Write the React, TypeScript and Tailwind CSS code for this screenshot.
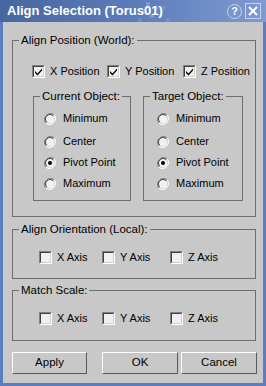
import React from "react"

const font = { fontFamily: '"Liberation Sans", Arial, sans-serif' }

function Check({ checked, label, className = "" }: { checked?: boolean; label: string; className?: string }) {
  return (
    <div className={`flex items-center shrink-0 ${className}`}>
      <div className="shrink-0 w-[13px] h-[13px] border-t border-l border-[#808080] border-b border-r border-b-white border-r-white">
        <div className="w-[11px] h-[11px] border-t border-l border-[#404040] border-b border-r border-b-[#d4d0c8] border-r-[#d4d0c8] bg-[#f2eff2] flex items-center justify-center">
          {checked && (
            <svg width="9" height="9" viewBox="0 0 9 9">
              <path d="M1 4 L3.5 6.5 L8 1.5 L8 3.5 L3.5 8.5 L1 6 Z" fill="#000" />
            </svg>
          )}
        </div>
      </div>
      <span className="ml-[5px] whitespace-nowrap text-[11px] text-black leading-[13px]">{label}</span>
    </div>
  )
}

function Radio({ checked, label, className = "" }: { checked?: boolean; label: string; className?: string }) {
  return (
    <div className={`flex items-center h-[21px] ${className}`}>
      <svg className="shrink-0" width="12" height="12" viewBox="0 0 12 12">
        <path d="M10.2 1.8 A6 6 0 0 0 1.8 10.2" stroke="#808080" fill="none" />
        <path d="M1.8 10.2 A6 6 0 0 0 10.2 1.8" stroke="#ffffff" fill="none" />
        <circle cx="6" cy="6" r="4.5" fill="#f2f0f2" />
        <path d="M9.2 2.8 A4.5 4.5 0 0 0 2.8 9.2" stroke="#404040" fill="none" />
        {checked && <circle cx="6" cy="6" r="2" fill="#000" />}
      </svg>
      <span className="ml-[7px] whitespace-nowrap text-[11px] text-black leading-[13px]">{label}</span>
    </div>
  )
}

function Group({ title, className = "", children }: { title: string; className?: string; children: React.ReactNode }) {
  return (
    <fieldset className={`border border-[#6e6e6e] ${className}`}>
      <legend className="ml-[6px] px-[2px] whitespace-nowrap text-[11.5px] leading-[14px] text-black">{title}</legend>
      {children}
    </fieldset>
  )
}

function Btn({ label, className = "" }: { label: string; className?: string }) {
  return (
    <button className={`h-[22px] border border-t-white border-l-white border-b-[#5a5a5a] border-r-[#5a5a5a] bg-[#c8c8c8] text-[11.5px] text-black ${className}`}>
      {label}
    </button>
  )
}

function RadioSet() {
  return (
    <>
      <Radio label="Minimum" className="mb-[2px]" />
      <Radio label="Center" />
      <Radio checked label="Pivot Point" />
      <Radio label="Maximum" />
    </>
  )
}

export default function App() {
  return (
    <div style={font} className="w-[266px] h-[386px] bg-[#5b7ec2] flex flex-col">
      <div className="relative h-[22px] bg-gradient-to-r from-[#46679f] via-[#5b7cba] to-[#7f9ad0] flex items-center">
        <svg className="absolute left-[138px] top-0" width="36" height="22" viewBox="0 0 36 22">
          <rect x="8" y="2" width="4" height="4" fill="#8aa2d4" opacity="0.7" />
          <rect x="16" y="6" width="4" height="4" fill="#8aa2d4" opacity="0.6" />
          <rect x="4" y="10" width="4" height="4" fill="#8aa2d4" opacity="0.5" />
          <rect x="12" y="14" width="4" height="4" fill="#8aa2d4" opacity="0.7" />
          <rect x="20" y="14" width="4" height="4" fill="#8aa2d4" opacity="0.5" />
          <rect x="24" y="6" width="4" height="4" fill="#8aa2d4" opacity="0.4" />
          <rect x="0" y="18" width="4" height="4" fill="#8aa2d4" opacity="0.4" />
          <rect x="28" y="18" width="4" height="4" fill="#8aa2d4" opacity="0.4" />
        </svg>
        <span className="relative ml-[7px] text-[13px] font-bold text-white">Align Selection (Torus01)</span>
        <div className="relative ml-auto mr-[5px] flex items-center gap-[3px]">
          <div className="w-[15px] h-[15px] rounded-full border border-[#c8d4ee] flex items-center justify-center text-[11px] font-bold text-white leading-none">?</div>
          <div className="w-[16px] h-[16px] border border-[#c8d4ee] flex items-center justify-center">
            <svg width="10" height="10" viewBox="0 0 10 10">
              <path d="M1 1 L9 9 M9 1 L1 9" stroke="#fff" strokeWidth="2" />
            </svg>
          </div>
        </div>
      </div>
      <div className="mx-[3px] mb-[3px] flex-1 bg-[#c8c8c8] pt-[11px] pl-[9px]">
        <Group title="Align Position (World):" className="w-[244px] h-[184px]">
          <div className="flex mt-[18px] pl-[19px]">
            <Check checked label="X Position" className="w-[75px]" />
            <Check checked label="Y Position" className="w-[76px]" />
            <Check checked label="Z Position" />
          </div>
          <div className="flex mt-[11px] ml-[20px]">
            <Group title="Current Object:" className="w-[98px] h-[112px]">
              <div className="ml-[10px] mt-[5px]">
                <RadioSet />
              </div>
            </Group>
            <Group title="Target Object:" className="ml-[12px] w-[100px] h-[112px]">
              <div className="ml-[13px] mt-[5px]">
                <RadioSet />
              </div>
            </Group>
          </div>
        </Group>
        <Group title="Align Orientation (Local):" className="mt-[5px] w-[244px] h-[57px]">
          <div className="flex mt-[15px] pl-[26px]">
            <Check label="X Axis" className="w-[63px]" />
            <Check label="Y Axis" className="w-[68px]" />
            <Check label="Z Axis" />
          </div>
        </Group>
        <Group title="Match Scale:" className="mt-[4px] w-[244px] h-[58px]">
          <div className="flex mt-[15px] pl-[26px]">
            <Check label="X Axis" className="w-[63px]" />
            <Check label="Y Axis" className="w-[68px]" />
            <Check label="Z Axis" />
          </div>
        </Group>
        <div className="flex mt-[11px]">
          <Btn label="Apply" className="w-[75px]" />
          <Btn label="OK" className="ml-[15px] w-[76px]" />
          <Btn label="Cancel" className="ml-[3px] w-[76px]" />
        </div>
      </div>
    </div>
  )
}
